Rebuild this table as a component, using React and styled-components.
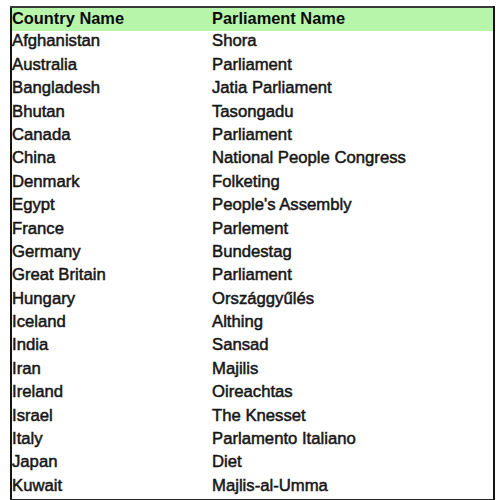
import React from "react";
import styled, { createGlobalStyle } from "styled-components";

const GlobalStyle = createGlobalStyle`
    html, body {
        margin: 0;
        padding: 0;
        background: #fff;
    }
    body {
        font-family: "Liberation Sans", Arial, sans-serif;
    }
`;

const Page = styled.div`
    padding: 6px 0 0 10px;
`;

const Table = styled.table`
    width: 485px;
    border-collapse: collapse;
    border: 2px solid #141414;
    border-top-color: #3a3a3a;
    border-bottom: 3px solid #262626;
    color: #161616;
`;

const HeadCell = styled.th`
    background: #b7f5aa;
    text-align: left;
    font-size: 16.4px;
    font-weight: bold;
    color: #0a0a0a;
    height: 23.4px;
    line-height: 20px;
    padding: 0 0 3.4px 0;
    width: ${(props) => props.width || "auto"};
    box-sizing: border-box;
`;

const Cell = styled.td`
    font-size: 16.7px;
    -webkit-text-stroke: 0.5px #161616;
    height: 23.4px;
    line-height: 20px;
    padding: 0 0 3.4px 0;
    box-sizing: border-box;
    white-space: nowrap;
`;

const rows = [
    ["Afghanistan", "Shora"],
    ["Australia", "Parliament"],
    ["Bangladesh", "Jatia Parliament"],
    ["Bhutan", "Tasongadu"],
    ["Canada", "Parliament"],
    ["China", "National People Congress"],
    ["Denmark", "Folketing"],
    ["Egypt", "People's Assembly"],
    ["France", "Parlement"],
    ["Germany", "Bundestag"],
    ["Great Britain", "Parliament"],
    ["Hungary", "Országgyűlés"],
    ["Iceland", "Althing"],
    ["India", "Sansad"],
    ["Iran", "Majilis"],
    ["Ireland", "Oireachtas"],
    ["Israel", "The Knesset"],
    ["Italy", "Parlamento Italiano"],
    ["Japan", "Diet"],
    ["Kuwait", "Majlis-al-Umma"],
];

export default function App() {
    return (
        <>
            <GlobalStyle />
            <Page>
                <Table>
                    <thead>
                        <tr>
                            <HeadCell width="201px">Country Name</HeadCell>
                            <HeadCell>Parliament Name</HeadCell>
                        </tr>
                    </thead>
                    <tbody>
                        {rows.map(([country, parliament]) => (
                            <tr key={country}>
                                <Cell>{country}</Cell>
                                <Cell>{parliament}</Cell>
                            </tr>
                        ))}
                    </tbody>
                </Table>
            </Page>
        </>
    );
}
